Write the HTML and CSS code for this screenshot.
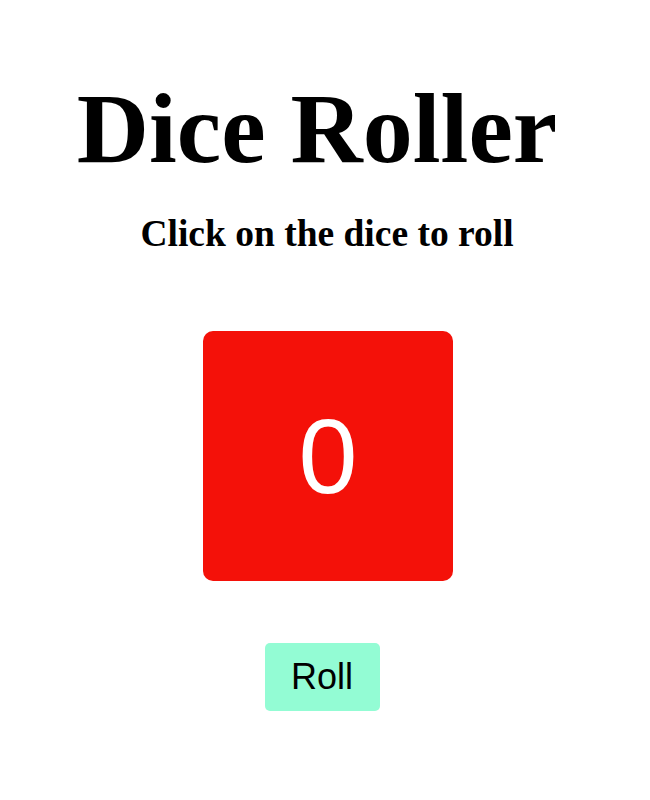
FILE: index.html
```html
<!DOCTYPE html>
<html>
<head>
<meta charset="utf-8">
<title>Dice Roller</title>
<link rel="stylesheet" href="styles.css">
</head>
<body>
<main class="app">
  <h1 class="title">Dice Roller</h1>
  <h2 class="subtitle">Click on the dice to roll</h2>
  <div class="dice">0</div>
  <button class="roll">Roll</button>
</main>
</body>
</html>
```
FILE: styles.css
```css
html, body {
  margin: 0;
  padding: 0;
  background: #ffffff;
}
.app {
  display: flex;
  flex-direction: column;
  align-items: center;
  font-family: "Liberation Serif", "Times New Roman", serif;
  color: #000;
}
.title {
  font-size: 100px;
  font-weight: bold;
  line-height: 110px;
  margin: 74px 16px 0 0;
}
.subtitle {
  font-size: 37.5px;
  font-weight: bold;
  line-height: 42px;
  margin: 29px 0 0 4px;
}
.dice {
  width: 250px;
  height: 250px;
  margin: 76px 0 0 6px;
  background: #f41109;
  border-radius: 10px;
  display: flex;
  align-items: center;
  justify-content: center;
  color: #ffffff;
  font-family: "Liberation Sans", Arial, sans-serif;
  font-size: 106px;
}
.roll {
  margin: 62px 6px 0 0;
  width: 115px;
  height: 68px;
  background: #93fcd4;
  border: none;
  border-radius: 5px;
  font-family: "Liberation Sans", Arial, sans-serif;
  font-size: 36px;
  color: #000;
  padding: 0;
}
```
